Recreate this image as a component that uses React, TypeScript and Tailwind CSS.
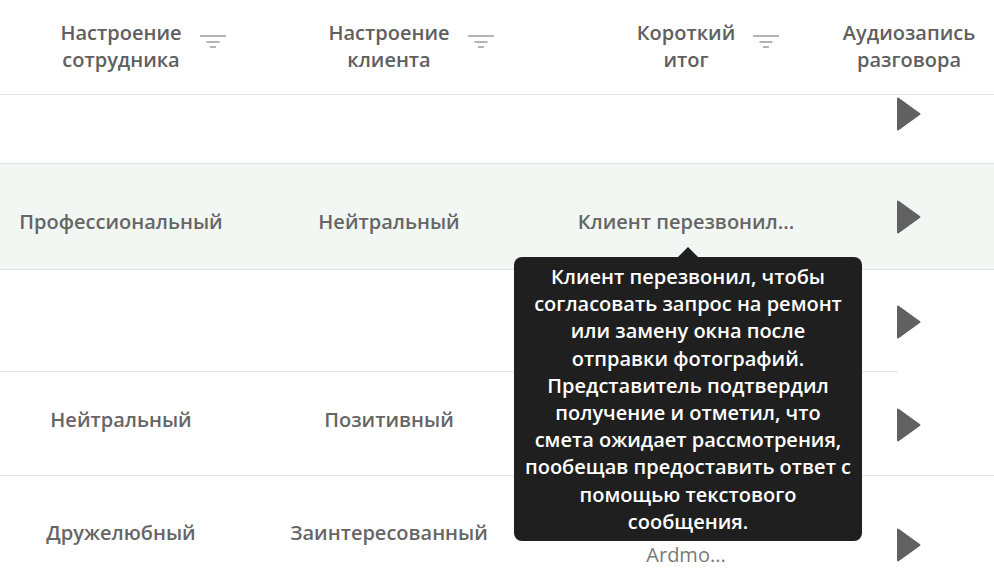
import React from "react";

type Row = {
  employee: string;
  client: string;
  summary: string;
  height: string;
  textPad: string;
  iconPad: string;
  highlighted?: boolean;
  tall?: boolean;
};

const rows: Row[] = [
  {
    employee: "Профессиональный",
    client: "Нейтральный",
    summary: "Клиент перезвонил...",
    height: "h-[106px]",
    textPad: "pt-[10px]",
    iconPad: "pt-[1px]",
    highlighted: true,
  },
  { employee: "", client: "", summary: "", height: "h-[102px]", textPad: "", iconPad: "pt-[2px]" },
  {
    employee: "Нейтральный",
    client: "Позитивный",
    summary: "Клиент уточнил статус...",
    height: "h-[104px]",
    textPad: "pb-[8px]",
    iconPad: "pt-[3px]",
  },
  {
    employee: "Дружелюбный",
    client: "Заинтересованный",
    summary: "",
    height: "h-[114px]",
    textPad: "",
    iconPad: "pt-[24px]",
    tall: true,
  },
];

const tooltipLines = [
  "Клиент перезвонил, чтобы",
  "согласовать запрос на ремонт",
  "или замену окна после",
  "отправки фотографий.",
  "Представитель подтвердил",
  "получение и отметил, что",
  "смета ожидает рассмотрения,",
  "пообещав предоставить ответ с",
  "помощью текстового",
  "сообщения.",
];

const cols = "grid grid-cols-[242px_294px_300px_146px]";

function FilterIcon() {
  return (
    <svg
      width="26"
      height="14"
      viewBox="0 0 26 14"
      className="absolute left-full top-1/2 ml-[18px] -translate-y-[11px]"
      aria-hidden="true"
    >
      <rect x="0" y="0" width="26" height="2" fill="#b4b4b4" />
      <rect x="6.5" y="6" width="13" height="2" fill="#b4b4b4" />
      <rect x="10" y="11" width="6" height="2" fill="#b4b4b4" />
    </svg>
  );
}

function PlayIcon() {
  return (
    <svg width="26" height="36" viewBox="0 0 26 36" className="relative z-10" aria-hidden="true">
      <path d="M2 2.5 L23.5 18 L2 33.5 Z" fill="#616161" stroke="#616161" strokeWidth="2" strokeLinejoin="round" />
    </svg>
  );
}

function HeaderCell({ lines, filter }: { lines: string[]; filter?: boolean }) {
  return (
    <div className="flex items-center justify-center">
      <div className="relative text-center leading-[27px]">
        {lines.map((l) => (
          <div key={l}>{l}</div>
        ))}
        {filter && <FilterIcon />}
      </div>
    </div>
  );
}

export default function App() {
  return (
    <div
      className="relative h-[584px] w-[994px] overflow-hidden bg-white text-[20px] text-[#666]"
      style={{ fontFamily: '"Open Sans", "Noto Sans", sans-serif' }}
    >
      {/* header */}
      <div className={`${cols} h-[95px] border-b border-[#e4e4e4] pb-[2px] font-semibold text-[#606060]`}>
        <HeaderCell lines={["Настроение", "сотрудника"]} filter />
        <HeaderCell lines={["Настроение", "клиента"]} filter />
        <HeaderCell lines={["Короткий", "итог"]} filter />
        <HeaderCell lines={["Аудиозапись", "разговора"]} />
      </div>

      {/* partially scrolled row */}
      <div className={`${cols} h-[69px] border-b border-[#e4e4e4]`}>
        <div />
        <div />
        <div />
        <div className="flex justify-center pt-[1px]">
          <PlayIcon />
        </div>
      </div>

      {rows.map((r, i) => (
        <div
          key={i}
          className={`${cols} ${r.height} border-b border-[#e4e4e4] font-semibold ${
            r.highlighted ? "bg-[#f2f7f3]" : ""
          }`}
        >
          <div className={`flex items-center justify-center ${r.textPad}`}>{r.employee}</div>
          <div className={`flex items-center justify-center ${r.textPad}`}>{r.client}</div>
          <div
            className={`flex items-center justify-center px-4 text-center leading-[28px] ${
              r.tall ? "pt-[16px]" : r.textPad
            }`}
          >
            {r.tall ? (
              <span className="whitespace-nowrap font-normal text-[#7a7a7a]">
                Клиент ждёт ответа от д
                <br />
                Ardmo...
              </span>
            ) : (
              r.summary
            )}
          </div>
          <div className={`flex items-center justify-center ${r.iconPad}`}>
            <PlayIcon />
          </div>
        </div>
      ))}

      {/* faded hover remnant on the right edge */}
      <div className="absolute left-[896px] top-[352px] h-[76px] w-[98px] rounded-l-[30px] bg-white" />

      {/* tooltip */}
      <div className="absolute left-[514px] top-[247px] z-20 w-[348px]">
        <div className="mx-auto h-0 w-0 border-x-[10px] border-b-[10px] border-x-transparent border-b-[#1f1f1f]" />
        <div className="rounded-[8px] bg-[#1f1f1f] px-2 py-[6px] text-center text-[20px] font-semibold leading-[27.2px] text-white">
          {tooltipLines.map((l) => (
            <div key={l} className="whitespace-nowrap">
              {l}
            </div>
          ))}
        </div>
      </div>
    </div>
  );
}
